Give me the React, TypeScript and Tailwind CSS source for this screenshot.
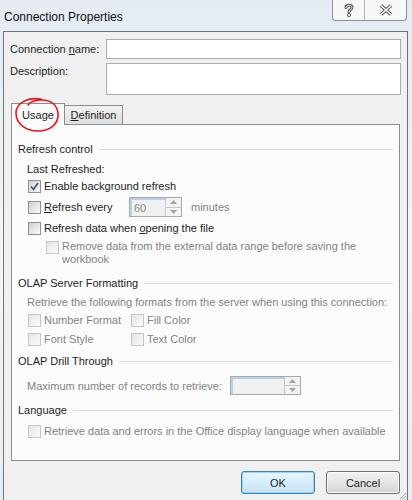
import React from "react";

const font = { fontFamily: '"Liberation Sans", Arial, sans-serif' };

const Check = ({ checked = false, disabled = false }: { checked?: boolean; disabled?: boolean }) => (
  <div
    className={
      "relative w-[13px] h-[13px] shrink-0 border " +
      (disabled
        ? "border-[#c6c6c6] bg-gradient-to-br from-[#e6e6e6] to-[#fafafa]"
        : "border-[#8e8f8f] bg-gradient-to-br from-[#cfcfcf] to-[#fbfbfb]")
    }
  >
    {checked && (
      <svg className="absolute left-[1px] top-[1px]" width="9" height="9" viewBox="0 0 9 9">
        <path d="M1 4.5 L3.5 7.5 L8 1" fill="none" stroke="#3c4f86" strokeWidth="1.6" />
      </svg>
    )}
  </div>
);

const Section = ({ title }: { title: string }) => (
  <div className="flex items-center h-[14px] pl-[6px] pr-[6px] gap-[6px] text-[#1e1e1e]">
    <span className="whitespace-nowrap">{title}</span>
    <div className="flex-1 h-px bg-[#d5dfe5]" />
  </div>
);

const Spin = ({ w, value }: { w: number; value?: string }) => (
  <div
    className="flex h-full border border-[#a9a9a9] bg-[#f0f0f0]"
    style={{ width: w }}
  >
    <div className="flex-1 border-t-2 border-l-2 border-[#b7d0ea] flex items-center pl-[2px] text-[#8a8a8a]">
      {value}
    </div>
    <div className="w-[16px] flex flex-col border-l border-[#c9c9c9]">
      <div className="flex-1 border-b border-[#c9c9c9] flex items-center justify-center bg-[#f3f3f3]">
        <svg width="7" height="4" viewBox="0 0 7 4"><path d="M0 4 L3.5 0 L7 4Z" fill="#a5a5a5" /></svg>
      </div>
      <div className="flex-1 flex items-center justify-center bg-[#f3f3f3]">
        <svg width="7" height="4" viewBox="0 0 7 4"><path d="M0 0 L3.5 4 L7 0Z" fill="#a5a5a5" /></svg>
      </div>
    </div>
  </div>
);

const Item = ({
  label,
  checked,
  disabled,
  u,
}: {
  label: string;
  checked?: boolean;
  disabled?: boolean;
  u?: number;
}) => (
  <div className="flex items-center h-[16px] gap-[3px]">
    <Check checked={checked} disabled={disabled} />
    <span className={"whitespace-nowrap " + (disabled ? "text-[#838383]" : "text-[#1e1e1e]")}>
      {u === undefined ? (
        label
      ) : (
        <>
          {label.slice(0, u)}
          <span className="underline">{label[u]}</span>
          {label.slice(u + 1)}
        </>
      )}
    </span>
  </div>
);

export default function App() {
  return (
    <div
      className="relative w-[412px] h-[500px] overflow-hidden flex flex-col text-[11px] leading-[14px] bg-gradient-to-b from-[#e4ebf2] via-[#f3f6f9] to-[#e9eef3]"
      style={font}
    >
      {/* title bar */}
      <div className="h-[31px] flex items-start shrink-0">
        <div className="pl-[4px] pt-[10px] text-[12px] text-[#101010]">Connection Properties</div>
        <div className="ml-auto mr-[5px] flex h-[21px] border border-t-0 border-[#8c9299] rounded-b-[4px] bg-[#f6f8fa] overflow-hidden">
          <div className="w-[32px] flex items-center justify-center border-r border-[#aeb3b8]">
            <svg width="10" height="14" viewBox="0 0 10 14">
              <path d="M2 4.5 C2 1.5 8 1.5 8 4.5 C8 6.5 5 6.5 5 9" fill="none" stroke="#555" strokeWidth="3" strokeLinecap="round" />
              <path d="M2 4.5 C2 1.5 8 1.5 8 4.5 C8 6.5 5 6.5 5 9" fill="none" stroke="#fff" strokeWidth="1" strokeLinecap="round" />
              <circle cx="5" cy="12" r="1.6" fill="#fff" stroke="#555" strokeWidth="1" />
            </svg>
          </div>
          <div className="w-[41px] flex items-center justify-center">
            <svg width="14" height="12" viewBox="0 0 14 12">
              <path d="M2 1.5 L12 10.5 M12 1.5 L2 10.5" fill="none" stroke="#555" strokeWidth="3.6" />
              <path d="M2 1.5 L12 10.5 M12 1.5 L2 10.5" fill="none" stroke="#fff" strokeWidth="1.6" />
            </svg>
          </div>
        </div>
      </div>

      {/* window body */}
      <div className="relative flex-1 ml-[3px] mr-[4px] border-l border-t border-r border-[#6b737b] bg-[#f0f0f0] flex flex-col pl-[6px] pr-[6px]">
        <div className="flex mt-[7px] h-[20px] items-center">
          <div className="w-[96px] text-[#1e1e1e]">
            Connection <span className="underline">n</span>ame:
          </div>
          <div className="flex-1 h-full border border-[#abadb3] bg-white" />
        </div>
        <div className="flex mt-[4px] h-[32px]">
          <div className="w-[96px] pt-[1px] text-[#1e1e1e]">Description:</div>
          <div className="flex-1 h-full border border-[#abadb3] bg-white" />
        </div>

        {/* tabs */}
        <div className="flex items-end mt-[8px] ml-[1px] h-[21px]">
          <div className="relative z-10 w-[54px] h-[22px] -mb-px border border-b-0 border-[#898c95] bg-[#fbfbfb] flex items-center justify-center text-[#1e1e1e]">
            Usa<span className="underline">g</span>e
          </div>
          <div className="w-[58px] h-[19px] border border-b-0 border-l-0 border-[#898c95] bg-gradient-to-b from-[#f2f2f2] to-[#dedede] flex items-center justify-center text-[#1e1e1e]">
            <span className="underline">D</span>efinition
          </div>
        </div>
        <div className="ml-[1px] mr-[1px] h-[337px] border border-[#898c95] bg-[#fbfbfb] flex flex-col">
          <div className="mt-[17px]"><Section title="Refresh control" /></div>
          <div className="mt-[6px] pl-[15px] h-[14px] text-[#1e1e1e]">Last Refreshed:</div>
          <div className="mt-[2px] pl-[16px]"><Item label="Enable background refresh" checked /></div>
          <div className="mt-[3px] pl-[16px] flex items-center h-[20px]">
            <div className="w-[101px]"><Item label="Refresh every" u={0} /></div>
            <Spin w={53} value="60" />
            <span className="ml-[9px] text-[#838383]">minutes</span>
          </div>
          <div className="mt-[3px] pl-[16px]"><Item label="Refresh data when opening the file" u={18} /></div>
          <div className="mt-[4px] pl-[34px] flex gap-[3px]">
            <div className="pt-[1px]"><Check disabled /></div>
            <div className="text-[#838383] leading-[13px] w-[300px]">
              Remove data from the external data range before saving the workbook
            </div>
          </div>
          <div className="mt-[10px]"><Section title="OLAP Server Formatting" /></div>
          <div className="mt-[5px] pl-[15px] h-[14px] text-[#838383] whitespace-nowrap">
            Retrieve the following formats from the server when using this connection:
          </div>
          <div className="mt-[3px] pl-[16px] flex">
            <div className="w-[103px]"><Item label="Number Format" disabled /></div>
            <Item label="Fill Color" disabled />
          </div>
          <div className="mt-[3px] pl-[16px] flex">
            <div className="w-[103px]"><Item label="Font Style" disabled /></div>
            <Item label="Text Color" disabled />
          </div>
          <div className="mt-[7px]"><Section title="OLAP Drill Through" /></div>
          <div className="mt-[8px] pl-[15px] flex items-center h-[19px]">
            <div className="w-[203px] text-[#838383] whitespace-nowrap">Maximum number of records to retrieve:</div>
            <Spin w={71} />
          </div>
          <div className="mt-[8px]"><Section title="Language" /></div>
          <div className="mt-[6px] pl-[16px]">
            <Item label="Retrieve data and errors in the Office display language when available" disabled />
          </div>
        </div>

        {/* buttons */}
        <div className="flex justify-end gap-[11px] mt-[10px] mr-[1px]">
          <button className="w-[74px] h-[23px] rounded-[3px] border border-[#3c7fb1] bg-gradient-to-b from-[#eaf6fd] to-[#c5e3f6] shadow-[inset_0_0_0_1px_#9fd3f2] text-[#1e1e1e]">
            OK
          </button>
          <button className="w-[74px] h-[23px] rounded-[3px] border border-[#707070] bg-gradient-to-b from-[#f2f2f2] via-[#e6e6e6] to-[#d3d3d3] shadow-[inset_0_0_0_1px_#fbfbfb] text-[#1e1e1e]">
            Cancel
          </button>
        </div>

        {/* resize grip */}
        <svg className="absolute right-0 bottom-0" width="10" height="10" viewBox="0 0 10 10">
          <path d="M9 3 L3 9 M9 6 L6 9" stroke="#9a9a9a" strokeWidth="1" />
        </svg>

        {/* red circle annotation */}
        <svg className="absolute z-20 left-[8px] top-[64px] pointer-events-none" width="52" height="38" viewBox="0 0 52 38">
          <path
            d="M29 3 C14 1 4 8 4 17 C4 28 14 35 26 35 C38 35 47 28 46 17 C45 9 39 4 30 4 C24 4 18 6 16 9"
            fill="none"
            stroke="#e8141a"
            strokeWidth="1.6"
            strokeLinecap="round"
          />
        </svg>
      </div>
    </div>
  );
}
